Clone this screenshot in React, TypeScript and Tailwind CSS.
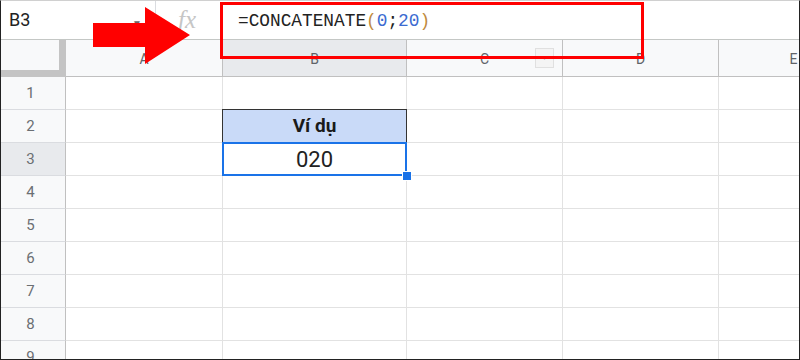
import React from "react";

const cols = [
  { key: "A", w: "w-[157px]", head: "bg-[#f8f9fa]" },
  { key: "B", w: "w-[184px]", head: "bg-[#e8eaed]" },
  { key: "C", w: "w-[156px]", head: "bg-[#f8f9fa]" },
  { key: "D", w: "w-[156px]", head: "bg-[#f8f9fa]" },
  { key: "E", w: "w-[150px]", head: "bg-[#f8f9fa]" },
];

const rows = [1, 2, 3, 4, 5, 6, 7, 8, 9];

function FormulaBar() {
  return (
    <div className="flex h-[40px] border-b border-[#c4c7c5] bg-white">
      <div className="flex w-[155px] items-center justify-between pl-[9px] pr-[13px] text-[18px] text-[#222]">
        <span>B3</span>
        <span className="mt-[8px] text-[10px] text-[#666]">▼</span>
      </div>
      <div className="w-px bg-[#dadce0]" />
      <div className="flex w-[64px] items-center pl-[22px]">
        <span className="font-['Liberation_Serif',serif] text-[25px] italic leading-none text-[#c6c6c6]">fx</span>
      </div>
      <div className="flex items-center pl-[18px] pt-[3px] font-['Liberation_Mono',monospace] text-[17.8px] text-[#222]">
        =CONCATENATE<span className="text-[#c08a3e]">(</span>
        <span className="text-[#3c6bd1]">0</span>;<span className="text-[#3c6bd1]">20</span>
        <span className="text-[#c08a3e]">)</span>
      </div>
    </div>
  );
}

function HeaderRow() {
  return (
    <div className="flex h-[37px]">
      <div className="h-[37px] w-[66px] shrink-0 border-b-[7px] border-r-[7px] border-[#c4c4c4] bg-[#f8f9fa]" />
      {cols.map((c) => (
        <div
          key={c.key}
          className={`relative flex h-[37px] shrink-0 items-center justify-center border-b border-r border-[#c0c0c0] pt-[2px] text-[14px] text-[#5f6368] ${c.w} ${c.head}`}
        >
          {c.key}
          {c.key === "C" && (
            <div className="absolute right-[8px] top-[8px] flex h-[20px] w-[19px] items-center justify-center border border-[#e0e0e0] bg-[#f4f4f4] text-[7px] text-[#9aa0a6]">
              ▼
            </div>
          )}
        </div>
      ))}
    </div>
  );
}

function Cell({ row, col }: { row: number; col: string }) {
  const base = `relative h-[33px] shrink-0 border-b border-r border-[#e2e2e2]`;
  const w = cols.find((c) => c.key === col)!.w;

  if (col === "B" && row === 2) {
    return (
      <div className={`${base} ${w} bg-[#c9daf8]`}>
        <div className="absolute -left-px -right-px -top-px bottom-0 border-x border-t border-[#333]" />
        <div className="relative flex h-full items-center justify-center text-[19px] font-bold text-[#1a1a1a]">Ví dụ</div>
      </div>
    );
  }
  if (col === "B" && row === 3) {
    return (
      <div className={`${base} ${w} z-10 bg-white`}>
        <div className="absolute -bottom-px -left-px -right-px -top-px border-2 border-[#1a73e8]" />
        <div className="flex h-full items-center justify-center pt-[1px] text-[22px] text-[#222]">020</div>
        <div className="absolute -bottom-[6px] -right-[6px] h-[10px] w-[10px] border border-white bg-[#1a73e8]" />
      </div>
    );
  }
  return <div className={`${base} ${w} bg-white`} />;
}

export default function App() {
  return (
    <div className="relative h-[360px] w-[800px] overflow-hidden bg-white font-['Roboto','Liberation_Sans',sans-serif]">
      <FormulaBar />
      <HeaderRow />
      {rows.map((r) => (
        <div key={r} className="flex h-[33px]">
          <div
            className={`flex h-[33px] w-[66px] shrink-0 items-center justify-center border-b border-r border-b-[#dadce0] border-r-[#c0c0c0] pr-[4px] text-[15px] text-[#6b6f73] ${
              r === 3 ? "bg-[#e8eaed]" : "bg-[#f8f9fa]"
            }`}
          >
            {r}
          </div>
          {cols.map((c) => (
            <Cell key={c.key} row={r} col={c.key} />
          ))}
        </div>
      ))}

      {/* annotation: red box round the formula */}
      <div className="pointer-events-none absolute left-[220px] top-[2px] h-[57px] w-[424px] border-[3px] border-[#ff0000]" />

      {/* annotation: red arrow */}
      <svg className="pointer-events-none absolute left-[93px] top-[7px]" width="98" height="58" viewBox="0 0 98 58">
        <polygon points="0,16 52,16 52,0 97,28 52,57 52,40 0,40" fill="#ff0000" />
      </svg>

      {/* image frame */}
      <div className="pointer-events-none absolute inset-0 border border-[#222] border-t-[#d0d0d0]" />
    </div>
  );
}
